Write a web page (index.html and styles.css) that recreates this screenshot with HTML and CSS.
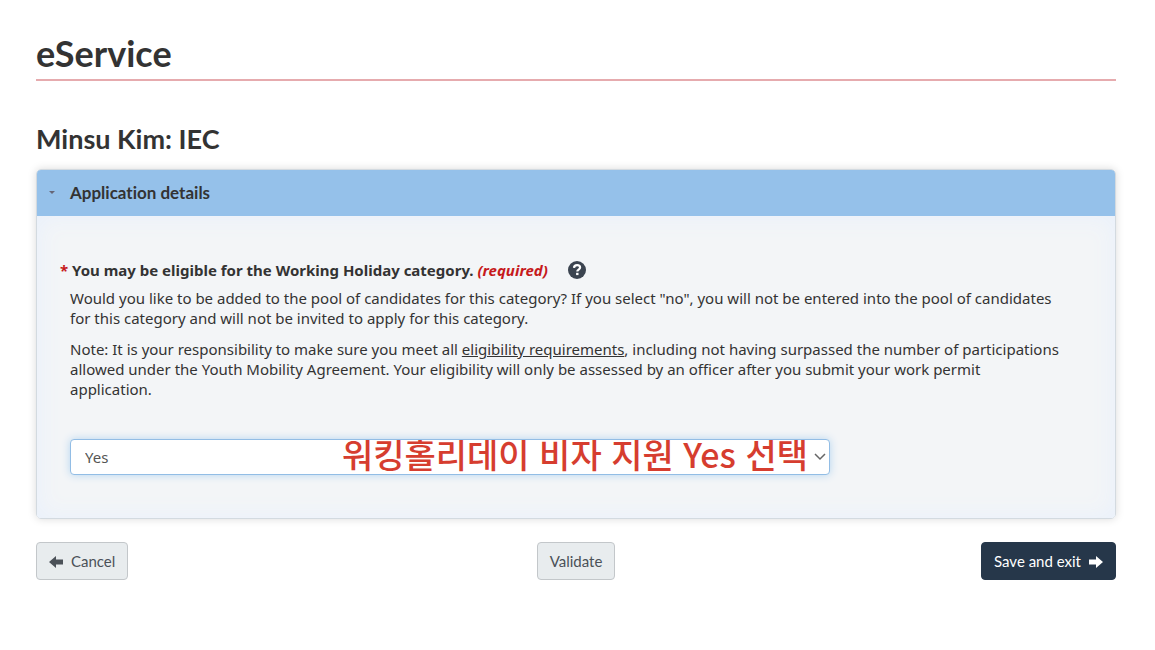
FILE: index.html
```html
<!DOCTYPE html>
<html lang="en">
<head>
  <meta charset="UTF-8">
  <meta name="viewport" content="width=device-width, initial-scale=1.0">
  <title>eService</title>
  <link rel="stylesheet" href="styles.css">
</head>
<body>
  <main class="container">
    <h1>eService</h1>
    <h2>Minsu Kim: IEC</h2>

    <form>
      <details class="panel" open>
        <summary>
          <svg class="caret" viewBox="0 0 6 4" aria-hidden="true"><path d="M0 0h6L3 3z"/></svg>
          Application details
        </summary>
        <div class="panel-body">
          <div class="question">
            <label for="workingHoliday"><span class="star">*</span> You may be eligible for the Working Holiday category. <em>(required)</em></label>
            <button type="button" class="help" aria-label="Help">
              <svg viewBox="0 0 18 18" aria-hidden="true">
                <circle cx="9" cy="9" r="9" fill="#3b4450"/>
                <path d="M6 6.9C6.1 5 7.3 4.2 9.1 4.2c1.800 0 3 .9 3 2.400 0 2.100-2.800 2.100-2.800 4" fill="none" stroke="#fff" stroke-width="2.200"/>
                <rect x="8.100" y="11.800" width="2.400" height="2.300" fill="#fff"/>
              </svg>
            </button>
          </div>
          <div class="help-text">
            <p>Would you like to be added to the pool of candidates for this category? If you select "no", you will not be entered into the pool of candidates for this category and will not be invited to apply for this category.</p>
            <p>Note: It is your responsibility to make sure you meet all <a href="#">eligibility requirements</a>, including not having surpassed the number of participations allowed under the Youth Mobility Agreement. Your eligibility will only be assessed by an officer after you submit your work permit application.</p>
          </div>
          <div class="select-box">
            <select id="workingHoliday">
              <option selected>Yes</option>
              <option>No</option>
            </select>
            <svg class="chevron" viewBox="0 0 12 8" aria-hidden="true"><path d="M1 1l5 5 5-5"/></svg>
            <span class="note" lang="ko">워킹홀리데이 비자 지원 Yes 선택</span>
          </div>
        </div>
      </details>

      <div class="buttons">
        <button type="button" class="btn">
          <svg viewBox="0 -2 14 14" aria-hidden="true"><path d="M0 6l7-6v3.500h7v5H7V12z"/></svg>
          Cancel
        </button>
        <button type="button" class="btn">Validate</button>
        <button type="submit" class="btn btn-primary">
          Save and exit
          <svg viewBox="0 -2 14 14" aria-hidden="true"><path d="M14 6L7 0v3.500H0v5h7V12z"/></svg>
        </button>
      </div>
    </form>
  </main>
</body>
</html>
```

FILE: styles.css
```css
* {
  box-sizing: border-box;
}
body {
  margin: 0;
  background: #fff;
  color: #333;
  font-family: "Noto Sans", sans-serif;
  font-size: 15px;
  line-height: 20px;
}
.container {
  padding: 32px 39px 32px 36px;
}
h1, h2 {
  margin: 0;
  font-family: Lato, sans-serif;
  font-weight: bold;
}
h1 {
  padding-bottom: 5px;
  border-bottom: 2px solid #e6abae;
  font-size: 36px;
  line-height: 42px;
}
h2 {
  margin: 40px 0 12px;
  font-size: 27px;
  line-height: 36px;
}
.panel {
  border: 1px solid #d3dae0;
  border-radius: 5px;
  box-shadow: 0 0 8px rgba(0, 0, 0, 0.15);
}
summary {
  display: flex;
  align-items: center;
  gap: 15px;
  padding: 13px 12px;
  background: #95c1ea;
  border-radius: 4px 4px 0 0;
  font-family: Lato, sans-serif;
  font-size: 17px;
  font-weight: bold;
  font-variant-ligatures: none;
  cursor: pointer;
}
.caret {
  width: 6px;
  height: 4px;
  fill: #667;
}
.panel-body {
  padding: 44px 53px 43px 23px;
  background: #f3f5f7;
  border-radius: 0 0 4px 4px;
  box-shadow: inset 0 0 24px #e8f0fc;
}
.question {
  display: flex;
  align-items: center;
  gap: 20px;
  font-weight: bold;
}
.star, .question em {
  color: #c61a1c;
}
.help {
  display: flex;
  padding: 0;
  background: none;
  border: none;
}
.help svg {
  width: 18px;
  height: 18px;
}
.help-text {
  margin: 8px 0 40px 10px;
}
.help-text p {
  margin: 0 0 11px;
}
.help-text a {
  color: inherit;
}
.select-box {
  position: relative;
  max-width: 770px;
  padding-left: 10px;
}
select {
  display: block;
  width: 100%;
  height: 36px;
  padding: 0 14px;
  appearance: none;
  background: #fff;
  border: 1px solid #92bde5;
  border-radius: 4px;
  box-shadow: 0 0 8px #b5d5ef;
  color: #555;
  font-family: inherit;
  font-size: 15px;
}
.chevron {
  position: absolute;
  top: 14px;
  right: 4px;
  width: 12px;
  height: 8px;
  fill: none;
  stroke: #666;
  stroke-width: 1.5;
}
.note {
  position: absolute;
  top: 1px;
  right: 22px;
  padding-bottom: 4px;
  overflow: hidden;
  color: #d63d2f;
  font-family: "Noto Sans CJK KR", sans-serif;
  font-size: 34px;
  font-weight: 500;
  line-height: 28px;
  white-space: nowrap;
  pointer-events: none;
}
.buttons {
  display: grid;
  grid-template-columns: 1fr auto 1fr;
  margin-top: 23px;
}
.btn {
  display: flex;
  align-items: center;
  justify-self: start;
  gap: 8px;
  height: 38px;
  padding: 0 12px;
  background: #e8ecee;
  border: 1px solid #c3c7ca;
  border-radius: 4px;
  color: #4b5158;
  font-family: Lato, sans-serif;
  font-size: 15px;
  cursor: pointer;
}
.btn svg {
  width: 14px;
  height: 14px;
  fill: currentColor;
}
.btn-primary {
  justify-self: end;
  background: #26374a;
  border-color: #26374a;
  color: #fff;
}
```
